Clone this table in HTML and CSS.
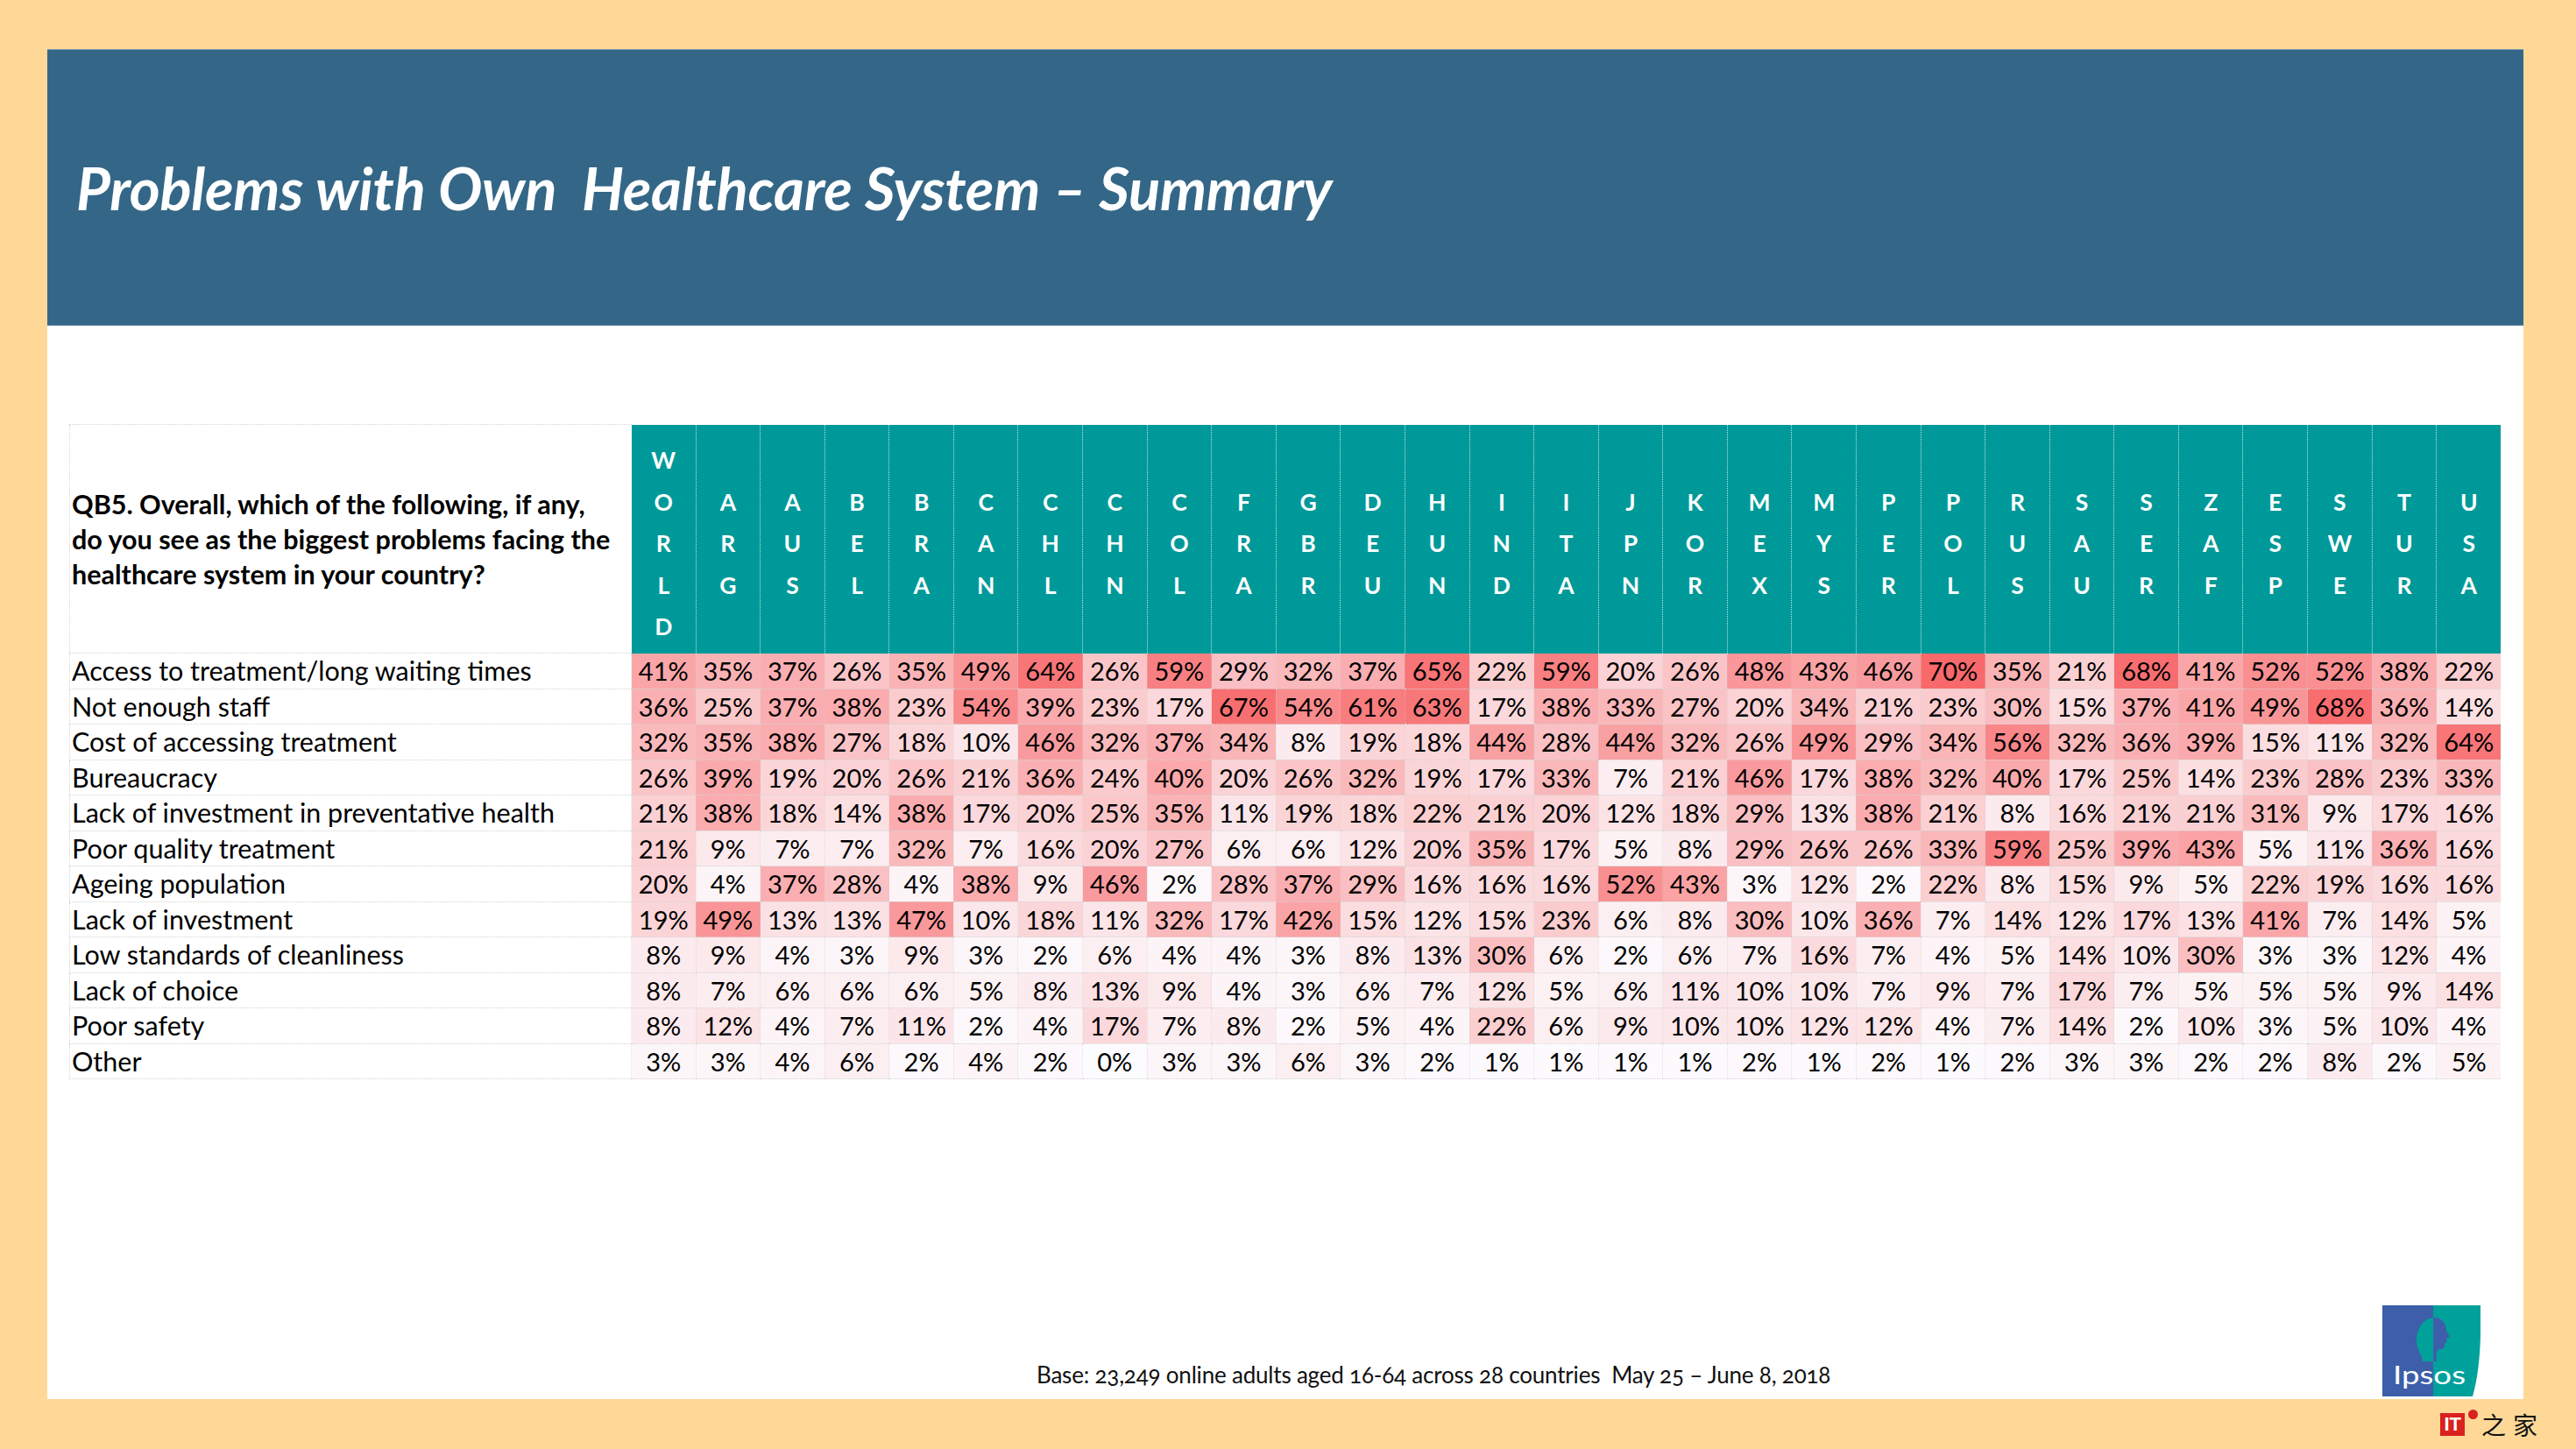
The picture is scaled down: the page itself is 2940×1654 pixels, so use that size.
FILE: index.html
```html
<!DOCTYPE html>
<html lang="en">
<head>
<meta charset="utf-8">
<title>Problems with Own Healthcare System – Summary</title>
<link rel="stylesheet" href="styles.css">
</head>
<body>
<div class="slide">
  <header class="banner">
    <h1 class="title">Problems with Own&nbsp; Healthcare System – Summary</h1>
  </header>
  <main class="content">
    <table class="heat">
      <colgroup>
        <col class="col-label">
      </colgroup>
      <thead>
        <tr class="head-row">
          <th class="question">QB5. Overall, which of the following, if any,<br>do you see as the biggest problems facing the<br>healthcare system in your country?</th>
        </tr>
      </thead>
      <tbody></tbody>
    </table>
  </main>
  <footer class="footer">
    <p class="base">Base: 23,249 online adults aged 16-64 across 28 countries&nbsp; May 25 – June 8, 2018</p>
    <svg class="logo" width="112" height="104" viewBox="0 0 112 104" aria-label="Ipsos">
      <defs>
        <clipPath id="leftHalf"><rect x="0" y="0" width="58" height="104"/></clipPath>
        <clipPath id="rightHalf"><rect x="58" y="0" width="60" height="104"/></clipPath>
      </defs>
      <rect x="0" y="0" width="58" height="104" fill="#3d5ea9"/>
      <path d="M58 0 H112 V34 Q111 76 103 104 H58 Z" fill="#00a19b"/>
      <path d="M46 64 C45 56 39 51 39 40 C39 24 49 14 60 14 C68 14 73 21 73 29 L77 36 L73 38 C74 41 73 43 71 44 C72 47 70 50 66 50 C62 50 61 54 62 64 Z" fill="#00a19b" clip-path="url(#leftHalf)"/>
      <path d="M46 64 C45 56 39 51 39 40 C39 24 49 14 60 14 C68 14 73 21 73 29 L77 36 L73 38 C74 41 73 43 71 44 C72 47 70 50 66 50 C62 50 61 54 62 64 Z" fill="#3d5ea9" clip-path="url(#rightHalf)"/>
      <text x="12" y="90" fill="#ffffff" font-family="Lato, 'Open Sans', sans-serif" font-size="29" textLength="83" lengthAdjust="spacingAndGlyphs">Ipsos</text>
    </svg>
  </footer>
</div>
<div class="watermark">
  <span class="wm-it">IT</span><span class="wm-dot"></span><span class="wm-cn">之家</span>
</div>
<script src="script.js"></script>
</body>
</html>
```

FILE: styles.css
```css
html, body {
  margin: 0;
  padding: 0;
}

body {
  width: 2940px;
  height: 1654px;
  background: #ffd897;
  display: flex;
  flex-direction: column;
  font-family: Lato, "Open Sans", "Liberation Sans", sans-serif;
  color: #000;
  overflow: hidden;
}

.slide {
  margin: 56px 60px 0 54px;
  height: 1541px;
  background: #ffffff;
  display: flex;
  flex-direction: column;
}

.banner {
  height: 316px;
  background: #346787;
  display: flex;
  align-items: center;
  padding-left: 33px;
  border-top: 1px solid #7a9bb0;
  border-bottom: 1px solid #7a9bb0;
  box-sizing: border-box;
}

.title {
  margin: 0;
  color: #ffffff;
  font-family: Lato, "Open Sans", sans-serif;
  font-style: italic;
  font-weight: 700;
  font-size: 67px;
  letter-spacing: -0.3px;
  white-space: pre;
}

.content {
  padding: 112px 0 0 25px;
}

.heat {
  table-layout: fixed;
  width: 2775px;
  border-collapse: collapse;
  font-size: 29px;
}

.col-label {
  width: 641px;
}

.col-code {
  width: 73.586px;
}

.head-row th {
  height: 249px;
  padding: 0;
  vertical-align: middle;
}

.question {
  text-align: left;
  font-weight: 700;
  font-size: 30.5px;
  line-height: 40px;
  padding: 0 0 0 2px !important;
  border-top: 1px dotted #d4d4d4;
  border-left: 1px dotted #d4d4d4;
  border-bottom: 1px dotted #d4d4d4;
  white-space: nowrap;
}

.code {
  background: #009999;
  color: #ffffff;
  font-weight: 700;
  font-size: 26.5px;
  line-height: 47.5px;
  text-align: center;
  border-left: 1px dotted rgba(255, 255, 255, 0.75);
  padding-top: 12px !important;
}

.heat tbody td {
  height: 39.5px;
  padding: 0;
  line-height: 39px;
  white-space: nowrap;
  border-bottom: 1px dotted #d4d4d4;
}

.heat tbody td.label {
  text-align: left;
  padding-left: 2px;
  font-size: 30.5px;
  border-left: 1px dotted #d4d4d4;
}

.val {
  text-align: center;
  border-left: 1px dotted rgba(205, 205, 205, 0.55);
}

.footer {
  margin-top: auto;
  display: flex;
  align-items: flex-end;
  padding-bottom: 3px;
}

.base {
  margin: 0 0 9px 1129px;
  font-size: 26px;
  color: #111;
  font-variant-numeric: oldstyle-nums;
  letter-spacing: -0.2px;
  white-space: pre;
}

.logo {
  display: block;
  margin-left: auto;
  margin-right: 49px;
}

.watermark {
  height: 57px;
  display: flex;
  justify-content: flex-end;
  align-items: center;
  padding-right: 36px;
  gap: 4px;
}

.wm-it {
  background: #d9211d;
  color: #fff;
  font-family: "Liberation Sans", sans-serif;
  font-weight: 700;
  font-size: 22px;
  line-height: 26px;
  padding: 0 4px;
}

.wm-dot {
  width: 11px;
  height: 11px;
  border-radius: 50%;
  background: #d9211d;
  align-self: flex-start;
  margin-top: 12px;
}

.wm-cn {
  font-family: "Noto Sans CJK SC", sans-serif;
  font-size: 28px;
  color: #111;
  letter-spacing: 8px;
}
```

FILE: script.js
```js
(function () {
  var codes = ["WORLD","ARG","AUS","BEL","BRA","CAN","CHL","CHN","COL","FRA","GBR","DEU","HUN","IND","ITA","JPN","KOR","MEX","MYS","PER","POL","RUS","SAU","SER","ZAF","ESP","SWE","TUR","USA"];
  var rows = [
    ["Access to treatment/long waiting times", [41,35,37,26,35,49,64,26,59,29,32,37,65,22,59,20,26,48,43,46,70,35,21,68,41,52,52,38,22]],
    ["Not enough staff", [36,25,37,38,23,54,39,23,17,67,54,61,63,17,38,33,27,20,34,21,23,30,15,37,41,49,68,36,14]],
    ["Cost of accessing treatment", [32,35,38,27,18,10,46,32,37,34,8,19,18,44,28,44,32,26,49,29,34,56,32,36,39,15,11,32,64]],
    ["Bureaucracy", [26,39,19,20,26,21,36,24,40,20,26,32,19,17,33,7,21,46,17,38,32,40,17,25,14,23,28,23,33]],
    ["Lack of investment in preventative health", [21,38,18,14,38,17,20,25,35,11,19,18,22,21,20,12,18,29,13,38,21,8,16,21,21,31,9,17,16]],
    ["Poor quality treatment", [21,9,7,7,32,7,16,20,27,6,6,12,20,35,17,5,8,29,26,26,33,59,25,39,43,5,11,36,16]],
    ["Ageing population", [20,4,37,28,4,38,9,46,2,28,37,29,16,16,16,52,43,3,12,2,22,8,15,9,5,22,19,16,16]],
    ["Lack of investment", [19,49,13,13,47,10,18,11,32,17,42,15,12,15,23,6,8,30,10,36,7,14,12,17,13,41,7,14,5]],
    ["Low standards of cleanliness", [8,9,4,3,9,3,2,6,4,4,3,8,13,30,6,2,6,7,16,7,4,5,14,10,30,3,3,12,4]],
    ["Lack of choice", [8,7,6,6,6,5,8,13,9,4,3,6,7,12,5,6,11,10,10,7,9,7,17,7,5,5,5,9,14]],
    ["Poor safety", [8,12,4,7,11,2,4,17,7,8,2,5,4,22,6,9,10,10,12,12,4,7,14,2,10,3,5,10,4]],
    ["Other", [3,3,4,6,2,4,2,0,3,3,6,3,2,1,1,1,1,2,1,2,1,2,3,3,2,2,8,2,5]]
  ];

  var table = document.querySelector(".heat");
  var colgroup = table.querySelector("colgroup");
  var headRow = table.querySelector(".head-row");
  var tbody = table.querySelector("tbody");

  codes.forEach(function (c) {
    var col = document.createElement("col");
    col.className = "col-code";
    colgroup.appendChild(col);
    var th = document.createElement("th");
    th.className = "code";
    th.innerHTML = c.split("").join("<br>");
    headRow.appendChild(th);
  });

  function heat(v) {
    var t = Math.max(0, Math.min(1, v / 70));
    var r = Math.round(252 + (248 - 252) * t);
    var g = Math.round(252 + (105 - 252) * t);
    var b = Math.round(255 + (107 - 255) * t);
    return "rgb(" + r + "," + g + "," + b + ")";
  }

  rows.forEach(function (row) {
    var tr = document.createElement("tr");
    var td = document.createElement("td");
    td.className = "label";
    td.textContent = row[0];
    tr.appendChild(td);
    row[1].forEach(function (v) {
      var cell = document.createElement("td");
      cell.className = "val";
      cell.textContent = v + "%";
      cell.style.background = heat(v);
      tr.appendChild(cell);
    });
    tbody.appendChild(tr);
  });
})();
```
